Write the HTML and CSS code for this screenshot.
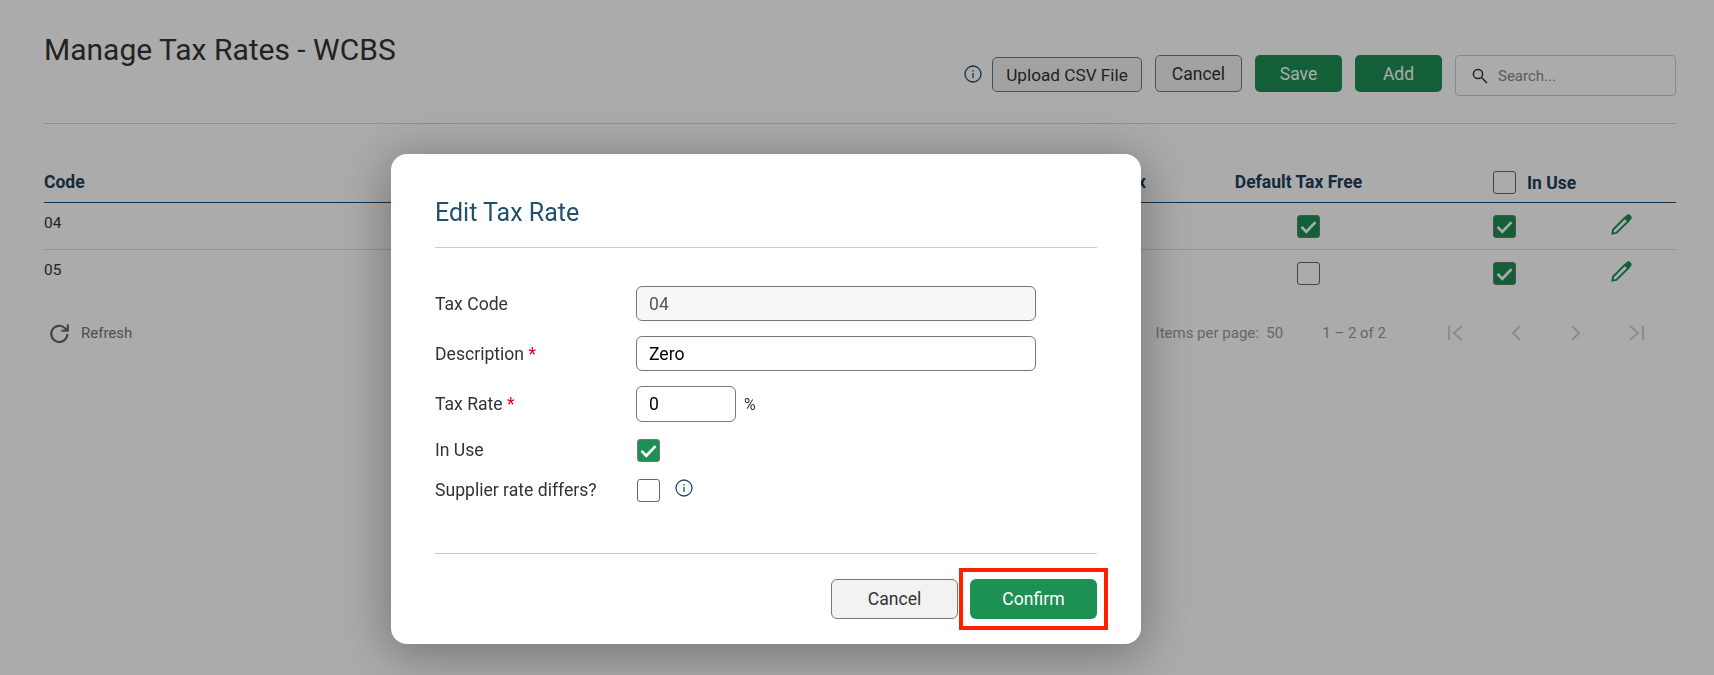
FILE: index.html
```html
<!DOCTYPE html>
<html lang="en">
<head>
<meta charset="utf-8">
<title>Manage Tax Rates - WCBS</title>
<link rel="stylesheet" href="styles.css">
</head>
<body>
<main class="page">
  <header class="page-head">
    <h1 class="page-title">Manage Tax Rates - WCBS</h1>
    <div class="actions">
      <svg class="info info-top" viewBox="0 0 18 18"><circle cx="9" cy="9" r="8"/><path d="M9 8v5M9 5v1.4"/></svg>
      <button class="btn btn-outline btn-upload">Upload CSV File</button>
      <button class="btn btn-outline">Cancel</button>
      <button class="btn btn-green">Save</button>
      <button class="btn btn-green">Add</button>
      <div class="search">
        <svg class="search-icon" viewBox="0 0 16 16"><circle cx="6" cy="6" r="4.6"/><path d="M9.5 9.5 15 15"/></svg>
        <span>Search...</span>
      </div>
    </div>
  </header>

  <section class="table">
    <div class="row row-head">
      <div class="cell-main"><span>Code</span><span>Tax</span></div>
      <div class="cell-center">Default Tax Free</div>
      <div class="cell-use"><span class="check"></span><span>In Use</span></div>
      <div></div>
    </div>
    <div class="row">
      <div class="cell-main"><span>04</span></div>
      <div class="cell-center"><span class="check check-on"><svg viewBox="0 0 24 24"><path d="M4 12.500l5.500 5.500L20 7"/></svg></span></div>
      <div class="cell-use"><span class="check check-on"><svg viewBox="0 0 24 24"><path d="M4 12.500l5.500 5.500L20 7"/></svg></span></div>
      <div class="cell-edit"><svg class="pencil" viewBox="0 0 24 24"><path d="M2.500 21.500l.8-4.200L15.500 5l3.500 3.500L6.700 20.700z"/><path class="pencil-tip" d="M15 4.500l2-2a2.500 2.500 0 0 1 4.500 4.500l-2 2z"/></svg></div>
    </div>
    <div class="row">
      <div class="cell-main"><span>05</span></div>
      <div class="cell-center"><span class="check"></span></div>
      <div class="cell-use"><span class="check check-on"><svg viewBox="0 0 24 24"><path d="M4 12.500l5.500 5.500L20 7"/></svg></span></div>
      <div class="cell-edit"><svg class="pencil" viewBox="0 0 24 24"><path d="M2.500 21.500l.8-4.200L15.500 5l3.500 3.500L6.700 20.700z"/><path class="pencil-tip" d="M15 4.500l2-2a2.500 2.500 0 0 1 4.500 4.500l-2 2z"/></svg></div>
    </div>
  </section>

  <footer class="table-foot">
    <div class="refresh">
      <svg viewBox="0 0 24 24"><path d="M20 13a8.800 8.800 0 1 1-2.600-6.300L20 9.200M20.500 2.500v7h-7"/></svg>
      <span>Refresh</span>
    </div>
    <div class="pager">
      <span class="per-page">Items per page: &nbsp;50</span>
      <span class="range">1 – 2 of 2</span>
      <svg viewBox="0 0 18 18"><path d="M2 2v14M15 2 7 9l8 7"/></svg>
      <svg viewBox="0 0 18 18"><path d="M13 2 6 9l7 7"/></svg>
      <svg viewBox="0 0 18 18"><path d="M5 2l7 7-7 7"/></svg>
      <svg viewBox="0 0 18 18"><path d="M16 2v14M3 2l8 7-8 7"/></svg>
    </div>
  </footer>
</main>

<div class="overlay"></div>

<div class="dialog">
  <h2 class="dialog-title">Edit Tax Rate</h2>
  <form class="form">
    <div class="field field-input">
      <label>Tax Code</label>
      <input class="input input-disabled" value="04" disabled>
    </div>
    <div class="field field-input">
      <label>Description <b>*</b></label>
      <input class="input" value="Zero">
    </div>
    <div class="field field-input field-rate">
      <label>Tax Rate <b>*</b></label>
      <input class="input input-small" value="0">
      <span class="percent">%</span>
    </div>
    <div class="field field-check">
      <label>In Use</label>
      <span class="check check-on check-bright"><svg viewBox="0 0 24 24"><path d="M4 12.500l5.500 5.500L20 7"/></svg></span>
    </div>
    <div class="field field-check">
      <label>Supplier rate differs?</label>
      <span class="check"></span>
      <svg class="info info-form" viewBox="0 0 18 18"><circle cx="9" cy="9" r="8"/><path d="M9 8v5M9 5v1.4"/></svg>
    </div>
  </form>
  <div class="dialog-actions">
    <button class="btn-dialog btn-cancel">Cancel</button>
    <button class="btn-dialog btn-confirm">Confirm</button>
    <span class="highlight"></span>
  </div>
</div>
</body>
</html>
```
FILE: styles.css
```css
* { box-sizing: border-box; }
html, body { height: 100%; }
body {
  margin: 0;
  overflow: hidden;
  background: #fff;
  color: #333;
  font-family: Roboto, "Liberation Sans", sans-serif;
}
button, input { font-family: inherit; }

.page { padding: 0 38px 0 44px; }

.page-head {
  display: flex;
  justify-content: space-between;
  height: 124px;
  border-bottom: 1px solid #d5d5d5;
}
.page-title {
  margin: 31px 0 0;
  font-size: 30px;
  line-height: 37px;
  font-weight: 400;
  color: #333;
}
.actions {
  display: flex;
  align-items: flex-start;
  gap: 13px;
  padding-top: 55px;
}
.info { fill: none; stroke: #1e4a6d; stroke-width: 1.3; }
.info-top { width: 18px; height: 18px; margin: 10px -3px 0 0; }
.btn {
  width: 87px;
  height: 37px;
  padding: 0;
  border-radius: 5px;
  font-size: 17.500px;
  cursor: pointer;
}
.btn-outline { background: #f2f2f2; border: 1px solid #777; color: #333; }
.btn-upload { width: 150px; height: 35px; margin-top: 2px; font-size: 17.200px; }
.btn-green { background: #1d9054; border: 0; color: #fff; }
.search {
  display: flex;
  align-items: center;
  gap: 10px;
  width: 221px;
  height: 41px;
  padding-left: 16px;
  border: 1px solid #ccc;
  border-radius: 4px;
  color: #8a8a8a;
  font-size: 15px;
}
.search-icon { width: 16px; height: 16px; fill: none; stroke: #333; stroke-width: 1.500; }

.table { margin-top: 36px; }
.row {
  display: grid;
  grid-template-columns: 1102px 305px 147px 78px;
  height: 47px;
  align-items: start;
  border-bottom: 1px solid #ddd;
  font-size: 15.400px;
  color: #333;
}
.row:last-child { border-bottom: 0; height: 46px; }
.row-head {
  height: 43px;
  border-bottom: 1px solid #1e4a6d;
  font-size: 17.500px;
  font-weight: 700;
  color: #1e3f5a;
  padding-top: 11px;
}
.cell-main { display: flex; justify-content: space-between; padding-top: 11px; }
.row-head .cell-main, .row-head .cell-center { padding-top: 1px; }
.cell-center { display: flex; justify-content: center; padding-top: 12px; }
.cell-center .check { margin-left: 19px; }
.cell-use { display: flex; align-items: center; gap: 11px; padding: 12px 0 0 42px; }
.row-head .cell-use { padding-top: 0; }
.cell-edit { padding: 10px 0 0 12px; }
.check {
  display: block;
  flex: none;
  width: 23px;
  height: 23px;
  border: 1px solid #666;
  border-radius: 3px;
  background: #fff;
}
.check svg { display: block; fill: none; stroke: #fff; stroke-width: 3; }
.check-on { background: #1d9054; border-color: #777; }
.pencil { display: block; width: 23px; height: 23px; fill: none; stroke: #1d9054; stroke-width: 2; }
.pencil-tip { fill: #1d9054; stroke: none; }

.table-foot {
  display: flex;
  justify-content: space-between;
  align-items: center;
  padding: 26px 31px 0 5px;
  font-size: 15px;
}
.refresh { display: flex; align-items: center; gap: 10px; color: #777; }
.refresh svg { width: 22px; height: 22px; fill: none; stroke: #666; stroke-width: 2.300; }
.pager { display: flex; align-items: center; color: #999; }
.per-page { margin-right: 39px; }
.range { margin-right: 61px; }
.pager svg { width: 18px; height: 18px; margin-right: 42px; fill: none; stroke: #d4d4d4; stroke-width: 2.300; }
.pager svg:last-child { margin-right: 0; }

.overlay { position: fixed; inset: 0; background: rgba(0, 0, 0, .33); }

.dialog {
  position: fixed;
  left: 391px;
  top: 154px;
  width: 750px;
  height: 490px;
  padding: 38px 44px 0;
  background: #fff;
  border-radius: 16px;
  box-shadow: 0 8px 50px 4px rgba(0,0,0,.32);
}
.dialog-title {
  margin: 0;
  height: 56px;
  font-size: 25px;
  line-height: 42px;
  font-weight: 400;
  color: #24506f;
  border-bottom: 1px solid #c4ced4;
}
.form { height: 306px; padding-top: 38px; border-bottom: 1px solid #c4ced4; }
.field { display: flex; align-items: center; font-size: 17.600px; color: #333; }
.field label { flex: none; width: 201px; }
.field b { color: #e0001b; font-weight: 400; }
.field-input { height: 35px; margin-bottom: 15px; }
.field-rate { height: 36px; margin-bottom: 16px; }
.field-check { height: 24px; margin-bottom: 16px; }
.input {
  width: 400px;
  height: 100%;
  padding: 0 12px;
  border: 1px solid #777;
  border-radius: 6px;
  font-size: 17.600px;
  color: #000;
  background: #fff;
}
.input-disabled { background: #f7f7f7; color: #555; }
.input-small { width: 100px; }
.percent { margin-left: 8px; font-size: 16px; }
.field-check .check { margin-left: 1px; }
.info-form { width: 18px; height: 18px; margin: -4px 0 0 15px; }

.dialog-actions {
  position: relative;
  display: flex;
  justify-content: flex-end;
  gap: 12px;
  padding-top: 25px;
}
.btn-dialog {
  width: 127px;
  height: 40px;
  padding: 0;
  border-radius: 6px;
  font-size: 17.600px;
  cursor: pointer;
}
.btn-cancel { background: #f2f2f2; border: 1px solid #777; color: #333; }
.btn-confirm { background: #1d9054; border: 0; color: #fff; }
.highlight {
  position: absolute;
  right: -11px;
  top: 14px;
  width: 149px;
  height: 62px;
  border: 4px solid #ff2000;
}
```
